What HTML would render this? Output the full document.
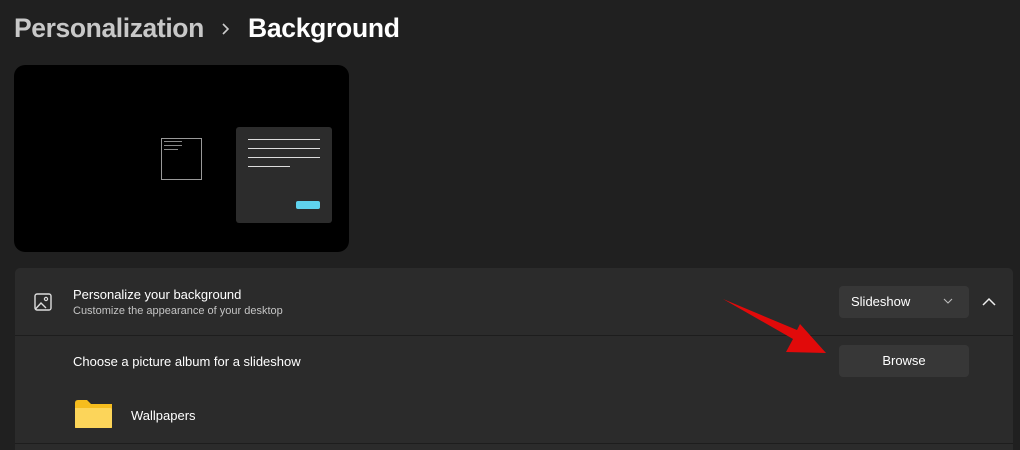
<!DOCTYPE html>
<html><head><style>
body{margin:0;width:1020px;height:450px;background:#202020;font-family:"Liberation Sans",sans-serif;position:relative;overflow:hidden;color:#fff}
.a{position:absolute}
</style></head><body>
<div class="a" style="left:14px;top:13px;font-size:26.5px;font-weight:bold;color:#c8c8c8;letter-spacing:-0.4px">Personalization</div>
<svg class="a" style="left:220px;top:22px" width="12" height="14"><path d="M3 2 L8 7 L3 12" stroke="#ccc" stroke-width="1.6" fill="none"/></svg>
<div class="a" style="left:248px;top:13px;font-size:26.5px;font-weight:bold;color:#fff;letter-spacing:-0.3px">Background</div>

<div class="a" style="left:14px;top:65px;width:335px;height:187px;background:#000;border-radius:11px"></div>
<div class="a" style="left:161px;top:138px;width:39px;height:40px;border:1px solid #999"></div>
<div class="a" style="left:164px;top:141px;width:18px;height:1px;background:#888"></div>
<div class="a" style="left:164px;top:145px;width:18px;height:1px;background:#888"></div>
<div class="a" style="left:164px;top:149px;width:14px;height:1px;background:#888"></div>
<div class="a" style="left:236px;top:127px;width:96px;height:96px;background:#2c2c2c;border-radius:3px"></div>
<div class="a" style="left:248px;top:139px;width:72px;height:1px;background:#ddd"></div>
<div class="a" style="left:248px;top:148px;width:72px;height:1px;background:#ddd"></div>
<div class="a" style="left:248px;top:157px;width:72px;height:1px;background:#ddd"></div>
<div class="a" style="left:248px;top:166px;width:42px;height:1px;background:#ddd"></div>
<div class="a" style="left:296px;top:201px;width:24px;height:8px;background:#5fd3ee;border-radius:2px"></div>

<div class="a" style="left:15px;top:268px;width:998px;height:182px;background:#2b2b2b;border-radius:5px 5px 0 0"></div>
<div class="a" style="left:15px;top:335px;width:998px;height:1px;background:#1d1d1d"></div>
<div class="a" style="left:15px;top:443px;width:998px;height:1px;background:#1d1d1d"></div>
<svg class="a" style="left:34px;top:293px" width="18" height="18"><rect x="1" y="1" width="16" height="16" rx="2" stroke="#ddd" stroke-width="1.4" fill="none"/><path d="M1.5 16 L7 10 L12 15" stroke="#ddd" stroke-width="1.4" fill="none"/><circle cx="12" cy="6" r="1.6" stroke="#ddd" stroke-width="1.2" fill="none"/></svg>
<div class="a" style="left:73px;top:287px;font-size:13px;color:#fff">Personalize your background</div>
<div class="a" style="left:73px;top:305px;font-size:11px;color:#c4c4c4">Customize the appearance of your desktop</div>
<div class="a" style="left:73px;top:354px;font-size:13px;color:#fff">Choose a picture album for a slideshow</div>
<svg class="a" style="left:75px;top:400px" width="37" height="28"><path d="M0 3 Q0 0 3 0 L12 0 L16 4 L37 4 L37 28 L0 28 Z" fill="#f6bd1e"/><path d="M0 8 L35 8 Q37 8 37 10 L37 26 Q37 28 35 28 L2 28 Q0 28 0 26 Z" fill="#fcd55a"/></svg>
<div class="a" style="left:131px;top:408px;font-size:13px;color:#fff">Wallpapers</div>

<div class="a" style="left:839px;top:286px;width:130px;height:32px;background:#373737;border-radius:4px"></div>
<div class="a" style="left:851px;top:294px;font-size:13px;color:#fff">Slideshow</div>
<svg class="a" style="left:943px;top:298px" width="10" height="6"><path d="M1 1 L5 5 L9 1" stroke="#bbb" stroke-width="1.1" fill="none"/></svg>
<svg class="a" style="left:982px;top:297px" width="14" height="9"><path d="M1 8 L7 2 L13 8" stroke="#eee" stroke-width="1.5" fill="none"/></svg>
<div class="a" style="left:839px;top:345px;width:130px;height:32px;background:#373737;border-radius:4px;font-size:13px;line-height:32px;text-align:center">Browse</div>

<svg class="a" style="left:0;top:0" width="1020" height="450"><path d="M723 299 L797 330 L800 324 L826 353 L786 352 L793 339 Z" fill="#e10a0a"/></svg>
</body></html>
